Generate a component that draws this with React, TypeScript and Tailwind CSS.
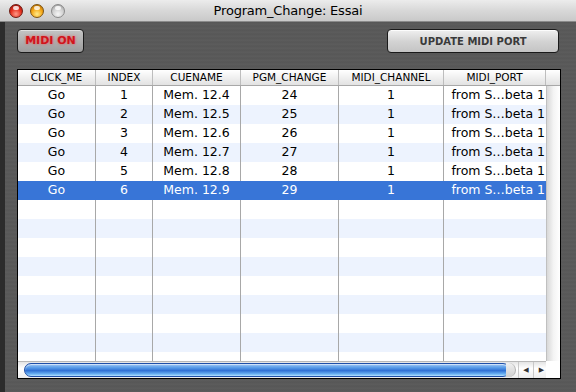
import React from 'react';

const font = { fontFamily: '"DejaVu Sans", "Lucida Grande", sans-serif' };

const columns = [
  { key: 'click', label: 'CLICK_ME', w: 'w-[78px]' },
  { key: 'index', label: 'INDEX', w: 'w-[57px]' },
  { key: 'cue', label: 'CUENAME', w: 'w-[88px]' },
  { key: 'pgm', label: 'PGM_CHANGE', w: 'w-[98px]' },
  { key: 'chan', label: 'MIDI_CHANNEL', w: 'w-[105px]' },
  { key: 'port', label: 'MIDI_PORT', w: 'w-[102px]' },
];

const rows = [1, 2, 3, 4, 5, 6].map((i) => ({
  click: 'Go',
  index: String(i),
  cue: `Mem. 12.${i + 3}`,
  pgm: String(23 + i),
  chan: '1',
  port: 'from S…beta 1',
}));

const SELECTED = 5;
const TOTAL_ROWS = 15;

function TrafficLight({ color }: { color: 'red' | 'yellow' | 'gray' }) {
  const cls =
    color === 'red'
      ? 'bg-[radial-gradient(circle_at_50%_75%,#ff9a88_0%,#e6301f_50%,#8c0f08_100%)] border-[#6e1a12]'
      : color === 'yellow'
      ? 'bg-[radial-gradient(circle_at_50%_75%,#ffeb8a_0%,#f5a818_50%,#a35d00_100%)] border-[#7e5410]'
      : 'bg-[radial-gradient(circle_at_50%_75%,#f6f6f6_0%,#cdcdcd_55%,#8e8e8e_100%)] border-[#8a8a8a]';
  return (
    <div className={`relative w-[14px] h-[14px] rounded-full border ${cls}`}>
      <div className="absolute left-[3px] top-[1px] w-[6px] h-[4px] rounded-full bg-white/80" />
    </div>
  );
}

function HScroll() {
  return (
    <div className="flex h-[17px] shrink-0 bg-[linear-gradient(#e4e4e4,#ffffff_40%,#ececec)] border-t border-[#b8b8b8]">
      <div className="flex-1 flex items-center pl-[6px] pr-[2px]">
        <div className="h-[14px] w-[486px] rounded-full border border-[#1f4fa8] bg-[linear-gradient(#9cc4f5,#5a9de8_30%,#2f6fd4_55%,#6eb6f5_85%,#b8e0ff)] shadow-[inset_0_1px_1px_rgba(255,255,255,0.6)]" />
        <div className="w-[10px] h-[14px] -ml-[4px] rounded-r-full bg-[linear-gradient(#f0f0f0,#cfcfcf)] border-r border-[#b0b0b0]" />
      </div>
      <div className="flex items-center border-l border-[#c8c8c8]">
        <div className="w-[15px] h-full flex items-center justify-center border-r border-[#c8c8c8] text-[7px] text-[#333]">◀</div>
        <div className="w-[15px] h-full flex items-center justify-center text-[7px] text-[#333]">▶</div>
      </div>
    </div>
  );
}

export default function App() {
  return (
    <div className="w-[576px] h-[392px] flex flex-col overflow-hidden bg-[#3e3e3e]" style={font}>
      {/* title bar */}
      <div className="relative h-[22px] shrink-0 flex items-center justify-center bg-[linear-gradient(#ececec,#d8d8d8_50%,#c9c9c9)] border-b border-[#8a8a8a]">
        <div className="absolute left-[9px] top-[4px] flex gap-[7px]">
          <TrafficLight color="red" />
          <TrafficLight color="yellow" />
          <TrafficLight color="gray" />
        </div>
        <span className="text-[13px] text-black tracking-[-0.2px]">Program_Change: Essai</span>
      </div>

      {/* brushed metal body */}
      <div className="flex-1 min-h-0 flex flex-col pl-[12px] pr-[15px] pt-[7px] bg-[repeating-linear-gradient(180deg,#5c5c5c_0px,#535353_1px,#616161_2px,#565656_3px,#5b5b5b_4px)] border-l-[5px] border-l-[#2c2c2c]">
        <div className="flex justify-between items-center h-[24px] shrink-0">
          <button className="w-[67px] h-[24px] rounded-[4px] border border-[#1a1a1a] bg-[linear-gradient(#c4c4c4,#9c9c9c)] shadow-[inset_0_1px_0_rgba(255,255,255,0.5)] flex items-center justify-center">
            <span className="text-[11px] font-bold text-[#d0141c] [text-shadow:0_0_3px_rgba(255,60,60,0.8)]">MIDI ON</span>
          </button>
          <button className="w-[172px] h-[24px] rounded-[4px] border border-[#1a1a1a] bg-[linear-gradient(#f0f0f0,#d4d4d4_50%,#c4c4c4)] shadow-[inset_0_1px_0_rgba(255,255,255,0.8)] flex items-center justify-center mr-[2px]">
            <span className="text-[10px] font-bold text-[#3a3a3a]">UPDATE MIDI PORT</span>
          </button>
        </div>

        {/* table */}
        <div className="mt-[16px] w-[544px] h-[310px] shrink-0 border border-black bg-white flex flex-col overflow-hidden">
          {/* header */}
          <div className="flex h-[16px] shrink-0 bg-[linear-gradient(#ffffff,#f0f0f0_50%,#e2e2e2)] border-b border-[#a8a8a8]">
            {columns.map((c) => (
              <div
                key={c.key}
                className={`${c.w} shrink-0 flex items-center justify-center border-r border-[#bdbdbd] text-[10.5px] text-black whitespace-nowrap`}
              >
                {c.label}
              </div>
            ))}
            <div className="flex-1" />
          </div>

          <div className="flex flex-1 min-h-0">
            <div className="flex flex-col w-[528px] min-h-0">
              {/* rows */}
              <div className="flex-1 min-h-0 overflow-hidden">
                {Array.from({ length: TOTAL_ROWS }).map((_, i) => {
                  const r = rows[i];
                  const sel = i === SELECTED;
                  const bg = sel ? 'bg-[#3875d7]' : i % 2 === 1 ? 'bg-[#edf3fe]' : 'bg-white';
                  return (
                    <div key={i} className={`flex h-[19px] ${bg}`}>
                      {columns.map((c, ci) => (
                        <div
                          key={c.key}
                          className={`${c.w} shrink-0 flex items-center whitespace-nowrap text-[12.5px] ${
                            sel ? 'text-white' : 'text-black'
                          } ${ci < columns.length - 1 ? (sel ? 'border-r border-[#3875d7]' : 'border-r border-[#a8a8a8]') : ''} ${
                            c.key === 'port' ? 'justify-end pr-[1px]' : 'justify-center'
                          }`}
                        >
                          {r ? r[c.key as keyof typeof r] : ''}
                        </div>
                      ))}
                    </div>
                  );
                })}
              </div>
              <HScroll />
            </div>
            {/* vertical scroller (empty) */}
            <div className="flex-1 flex flex-col">
              <div className="flex-1 bg-[linear-gradient(90deg,#d8d8d8,#f4f4f4_50%,#ffffff)] border-l border-[#c0c0c0]" />
              <div className="h-[17px] bg-white" />
            </div>
          </div>
        </div>
      </div>
    </div>
  );
}
